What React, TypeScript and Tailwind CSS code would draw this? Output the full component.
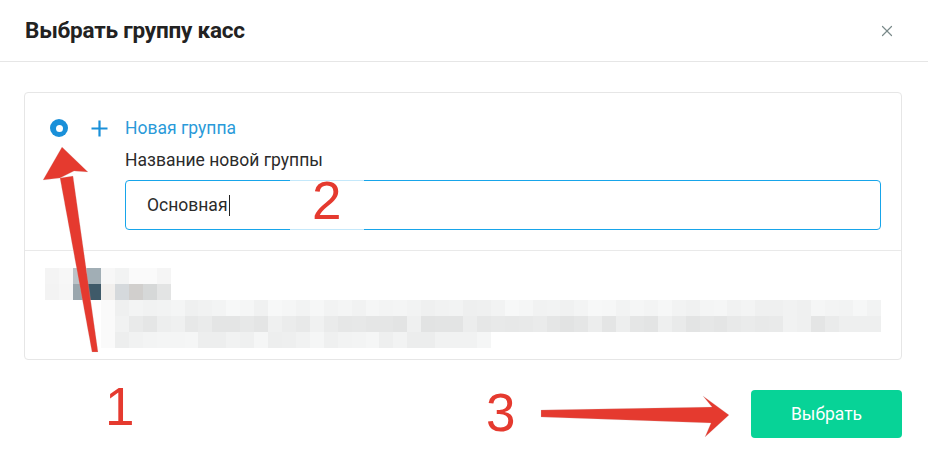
import { X } from "lucide-react";

const topCells = [
    ["#f4f4f4", "#f7f7f7", "#bcc3c8", "#a1aeb5", "#f7f7f7", "#f2f3f3", "#fafafa", "#fafafa", "#f5f5f5"],
    ["#f3f3f3", "#f6f6f6", "#9aa6ad", "#3f5a69", "#f1efed", "#d5d9dc", "#d1cfcd", "#d6d8d8", "#e3e4e4"],
];

// blurred text lines below the first pair of rows
const shade = (seed: number, base: number, spread: number) => {
    const v = Math.round(base + ((Math.sin(seed * 12.9898) * 43758.5453) % 1 + 1) % 1 * spread);
    return `rgb(${v},${v + 1},${v + 1})`;
};

const lineRow = (count: number, base: number, spread: number, seed: number) =>
    Array.from({ length: count }, (_, i) => (i === 0 ? "#fafafa" : shade(i + seed, base, spread)));

const lines = [
    lineRow(56, 238, 9, 1),
    lineRow(56, 226, 16, 40),
    lineRow(28, 236, 10, 90),
];

const Annotations = () => (
    <div className="pointer-events-none absolute inset-0">
        <div className="absolute left-[290px] top-[177px] h-[55px] w-[74px] bg-white/75" />
        <svg className="absolute inset-0" width="928" height="470" viewBox="0 0 928 470">
            <g fill="#e53a2f" stroke="#c9cbcc" strokeOpacity="0.35" strokeWidth="0.6">
                <polygon points="92,352 98,352 73,176 60,178" />
                <polygon points="43,180 62,147 88,172 74,171 60,178" />
                <polygon points="541,410 712,407 703,396 729,415 705,437 711,423 541,417" />
            </g>
        </svg>
        <span className="absolute left-[105px] top-[380px] text-[53px] leading-none text-[#e53a2f] font-['Liberation_Sans',sans-serif]">1</span>
        <span className="absolute left-[312px] top-[174px] text-[53px] leading-none text-[#e53a2f] font-['Liberation_Sans',sans-serif]">2</span>
        <span className="absolute left-[486px] top-[386px] text-[53px] leading-none text-[#e53a2f] font-['Liberation_Sans',sans-serif]">3</span>
    </div>
);

export default function App() {
    return (
        <div className="relative h-[470px] w-[928px] overflow-hidden bg-white font-['Roboto',sans-serif] text-[#333]">
            <header className="flex h-[62px] items-center justify-between border-b border-[#e6e6e6] pl-[25px] pr-[32px]">
                <h1 className="text-[22.5px] font-bold tracking-[-0.2px] text-[#222]">Выбрать группу касс</h1>
                <X className="size-[18px] text-[#7a8a8a]" strokeWidth={1.6} />
            </header>

            <main className="pl-6 pr-[26px] pt-[30px]">
                <div className="rounded-[4px] border border-[#e6e6e6]">
                    <div className="flex gap-[17px] border-b border-[#e9e9e9] pb-[20px] pl-[25px] pr-[20px] pt-[25px]">
                        <div className="flex h-[20px] items-center gap-[23px]">
                            <span className="flex size-[18px] items-center justify-center rounded-full bg-[#1a90d9]">
                                <span className="size-[7px] rounded-full bg-white" />
                            </span>
                            <svg width="17" height="17" viewBox="0 0 17 17">
                                <path d="M8.5 0.5v16M0.5 8.5h16" stroke="#1a90d9" strokeWidth="2.2" />
                            </svg>
                        </div>
                        <div className="flex flex-1 flex-col">
                            <span className="text-[17.5px] leading-[20px] text-[#2a9ad9]">Новая группа</span>
                            <span className="mt-[12px] text-[17.5px] leading-[20px] text-[#2b2b2b]">Название новой группы</span>
                            <div className="mt-[10px] flex h-[50px] items-center rounded-[4px] border border-[#17a5ea] pl-[21px]">
                                <span className="text-[17.5px] text-[#2b2b2b]">Основная</span>
                                <span className="ml-[1px] h-[21px] w-[1.5px] bg-[#222]" />
                            </div>
                        </div>
                    </div>
                    <div className="flex h-[108px] flex-col pl-[20px] pt-[17px]">
                        {topCells.map((row, r) => (
                            <div key={r} className="flex">
                                {row.map((c, i) => (
                                    <span key={i} className="h-4 w-[14px]" style={{ background: c }} />
                                ))}
                            </div>
                        ))}
                        {lines.map((row, r) => (
                            <div key={r} className="ml-[56px] flex">
                                {row.map((c, i) => (
                                    <span key={i} className="h-4 w-[13.93px]" style={{ background: c }} />
                                ))}
                            </div>
                        ))}
                    </div>
                </div>
            </main>

            <footer className="flex justify-end px-[26px] pt-[30px]">
                <button className="h-[48px] w-[151px] rounded-[4px] bg-[#07d397] text-[17.5px] text-white">Выбрать</button>
            </footer>

            <Annotations />
        </div>
    );
}
